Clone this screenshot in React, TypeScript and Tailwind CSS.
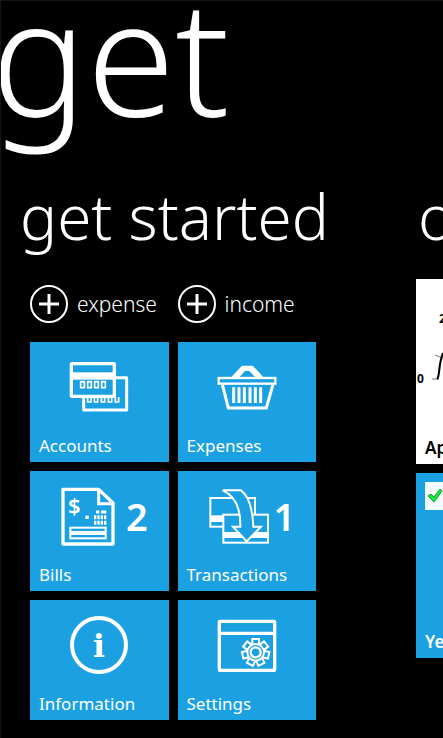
import type { ReactNode } from "react";

interface TileProps {
  label: string;
  count?: number;
  children: ReactNode;
}

const GEAR_TEETH = [0, 1, 2, 3, 4, 5, 6];

function AccountsIcon() {
  return (
    <svg viewBox="131 58 180 180" className="w-15 h-15" fill="none" stroke="white" aria-hidden="true">
      <path d="M270 120H304V217H175V180" strokeWidth="9" strokeLinejoin="round" />
      <rect x="138" y="78" width="129" height="98" rx="2" strokeWidth="10" />
      <rect x="138" y="104" width="129" height="22" fill="white" stroke="none" />
      {[166, 187, 208, 229].map((x) => (
        <rect key={x} x={x} y="132" width="11" height="18" strokeWidth="5" />
      ))}
      {[187, 207, 228, 249, 270].map((x) => (
        <path key={x} d={`M${x} 178V193H${x + 10}V178`} strokeWidth="5" />
      ))}
    </svg>
  );
}

function BasketIcon() {
  return (
    <svg viewBox="133 58 180 180" className="w-15 h-15" fill="none" stroke="white" aria-hidden="true">
      <path d="M174 120L208 84H240L274 120H249L230 100H217L199 120Z" fill="white" stroke="none" />
      <rect x="138" y="121" width="170" height="17" strokeWidth="7" />
      <path d="M149 140L167 211H281L301 140" strokeWidth="9" />
      <path d="M183 149V196M199 149V196M215 149V196M232 149V196M248 149V196M264 149V196" strokeWidth="9" />
    </svg>
  );
}

function BillIcon() {
  return (
    <svg viewBox="97 61 192 180" className="w-16 h-15" fill="none" stroke="white" aria-hidden="true">
      <path d="M112 71H219L262 112V235H112Z" strokeWidth="10" strokeLinejoin="round" />
      <path d="M219 73V114H260" strokeWidth="9" />
      <text
        x="127"
        y="144"
        fontSize="66"
        fontWeight="600"
        fontFamily="Noto Sans, sans-serif"
        fill="white"
        stroke="none"
      >
        $
      </text>
      <path d="M179 155H189" strokeWidth="10" />
      <path d="M211 139H221M226 139H242" strokeWidth="9" />
      <path d="M205 155H242M205 171H242" strokeWidth="12" strokeDasharray="7 3" />
      <rect x="134" y="186" width="106" height="13" strokeWidth="6" />
      <rect x="134" y="205" width="106" height="13" strokeWidth="6" />
    </svg>
  );
}

function TransactionsIcon() {
  return (
    <svg viewBox="99 61 192 180" className="w-16 h-15" fill="none" stroke="white" aria-hidden="true">
      <rect x="112" y="97" width="134" height="86" strokeWidth="6" />
      <rect x="112" y="149" width="134" height="20" fill="white" stroke="none" />
      <rect x="151" y="147" width="134" height="84" fill="#1ba1e2" strokeWidth="6" />
      <rect x="151" y="199" width="134" height="18" fill="white" stroke="none" />
      <path
        d="M149 74H204Q237 98 241 183H264L221 227L180 183H202Q204 98 149 74Z"
        fill="#1ba1e2"
        strokeWidth="6"
      />
    </svg>
  );
}

function InformationIcon() {
  return (
    <svg viewBox="131 59 180 180" className="w-15 h-15" fill="none" aria-hidden="true">
      <circle cx="221" cy="149" r="81" stroke="white" strokeWidth="12" />
      <text
        x="221"
        y="186"
        textAnchor="middle"
        fontSize="94"
        fontWeight="700"
        fontFamily="DejaVu Serif, serif"
        fill="white"
      >
        i
      </text>
    </svg>
  );
}

function SettingsIcon() {
  return (
    <svg viewBox="133 59 180 180" className="w-15 h-15" fill="none" stroke="white" aria-hidden="true">
      <rect x="140" y="78" width="166" height="147" rx="2" strokeWidth="10" />
      <path d="M140 114H306" strokeWidth="10" />
      {GEAR_TEETH.map((i) => (
        <path
          key={i}
          d="M239 149V131H259V149"
          strokeWidth="6"
          transform={`rotate(${(i * 360) / 7} 249 171)`}
        />
      ))}
      <circle cx="249" cy="171" r="25" strokeWidth="6" />
      <circle cx="249" cy="171" r="15" strokeWidth="7" />
    </svg>
  );
}

function Tile({ label, count, children }: TileProps) {
  return (
    <button
      type="button"
      className="flex h-30 flex-col justify-between bg-[#1ba1e2] pt-[15px] pb-1 text-left"
    >
      {count === undefined ? (
        <span className="flex w-full justify-center">{children}</span>
      ) : (
        <span className="flex w-full items-center gap-1 pl-7">
          {children}
          <span className="text-[38px] leading-[60px] font-semibold">{count}</span>
        </span>
      )}
      <span className="pl-[9px] text-[17px] leading-6">{label}</span>
    </button>
  );
}

function AddButton({ label }: { label: string }) {
  return (
    <button type="button" className="flex items-center gap-[9px] text-left">
      <svg viewBox="0 0 38 38" className="size-[38px] shrink-0" fill="none" stroke="white" aria-hidden="true">
        <circle cx="19" cy="19" r="18" strokeWidth="2" />
        <path d="M19 9V29M9 19H29" strokeWidth="3" />
      </svg>
      <span className="text-[21px] leading-[38px] font-light">{label}</span>
    </button>
  );
}

function ChartCard() {
  return (
    <a href="#chart" className="flex h-[185px] w-[185px] flex-col justify-between bg-white text-black">
      <svg viewBox="0 0 185 140" className="h-[140px] w-[185px]" fill="none" aria-hidden="true">
        <g fill="black" fontSize="12" fontWeight="700" fontFamily="Noto Sans, sans-serif">
          <text x="23" y="44">2</text>
          <text x="1" y="104">0</text>
        </g>
        <path d="M19 76L29 80M16 100H23" stroke="#777" strokeWidth="1" />
        <path d="M21 100C24 98 22 86 27 74" stroke="black" strokeWidth="2" />
      </svg>
      <span className="pb-1 pl-[9px] text-[17px] leading-6 font-semibold">Ap</span>
    </a>
  );
}

function StatusCard() {
  return (
    <a href="#status" className="flex h-[185px] w-[185px] flex-col justify-between bg-[#1ba1e2] pt-[9px]">
      <svg viewBox="0 0 28 28" className="ml-[9px] size-7" aria-hidden="true">
        <rect width="28" height="28" fill="#f4fbff" />
        <path
          d="M3 14L6 12L9 15L15 7L17 9L9 20Z"
          fill="#14e83c"
          stroke="#16a02c"
          strokeWidth="1"
          strokeLinejoin="round"
        />
      </svg>
      <span className="pb-1 pl-[9px] text-[17px] leading-6 font-semibold">Ye</span>
    </a>
  );
}

export default function App() {
  return (
    <main className="min-h-screen w-full overflow-hidden border-t border-l border-[#161616] bg-black font-['Noto_Sans',sans-serif] text-white">
      <h1 className="-ml-2.5 h-[170px] text-[160px] leading-[106px] font-light">get</h1>

      <div className="flex">
        {/* Main section */}
        <section className="w-[415px] shrink-0 pl-[29px]">
          <h2 className="-ml-2.5 text-[62px] leading-[90px] font-light whitespace-nowrap">get started</h2>
          <div className="mt-6 grid w-[286px] grid-cols-2 gap-x-[9px]">
            <AddButton label="expense" />
            <AddButton label="income" />
          </div>
          <div className="mt-[19px] grid w-[286px] grid-cols-2 gap-[9px]">
            <Tile label="Accounts">
              <AccountsIcon />
            </Tile>
            <Tile label="Expenses">
              <BasketIcon />
            </Tile>
            <Tile label="Bills" count={2}>
              <BillIcon />
            </Tile>
            <Tile label="Transactions" count={1}>
              <TransactionsIcon />
            </Tile>
            <Tile label="Information">
              <InformationIcon />
            </Tile>
            <Tile label="Settings">
              <SettingsIcon />
            </Tile>
          </div>
        </section>

        {/* Next section, peeking in from the right */}
        <section className="shrink-0">
          <h2 className="pl-0.5 text-[62px] leading-[90px] font-light">o</h2>
          <div className="mt-[18px] flex flex-col gap-[9px]">
            <ChartCard />
            <StatusCard />
          </div>
        </section>
      </div>
    </main>
  );
}
